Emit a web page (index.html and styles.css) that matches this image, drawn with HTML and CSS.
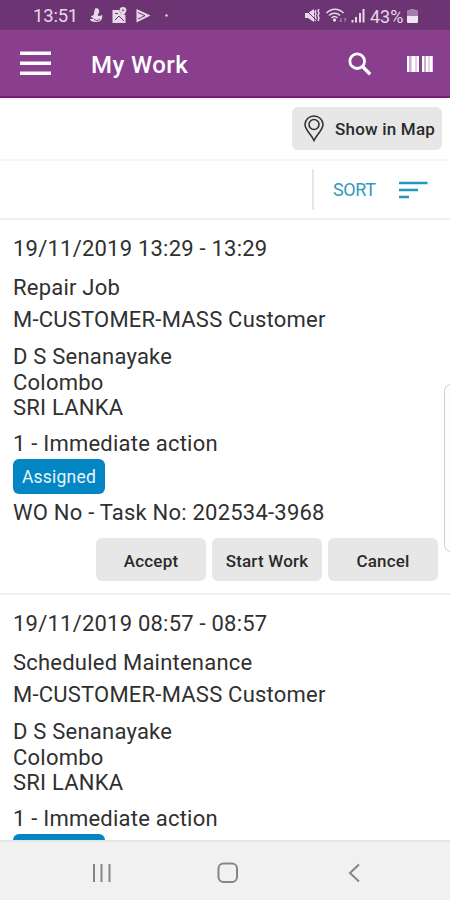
FILE: index.html
```
<!DOCTYPE html>
<html lang="en">
<head>
<meta charset="utf-8">
<title>My Work</title>
<link rel="stylesheet" href="styles.css">
</head>
<body>
<div class="screen">
  <div class="status">
    <span class="time">13:51</span>
    <svg class="notes" width="84" height="20" viewBox="0 0 84 20">
      <g fill="#e6d8e8">
        <path d="M6 2.500c3-1 5 1 4 4-1 2-2 2.500 0 3.500 2 0 3-1 3-2 1 5-1 8-6 8-4 0-6-1-6-3 1 0 3 0 4-1-2 0-3-1-3-2 2 0 3-1 3-3z"/>
        <path d="M23.500 4h7a5 5 0 0 0 6 5v8h-13z"/>
        <path d="M34 1a3.300 3.300 0 0 1 3.300 3.300C37.300 6.500 34 10 34 10s-3.300-3.500-3.300-5.700A3.300 3.300 0 0 1 34 1z"/>
        <path d="M47.500 3l14 6.500-14 7z"/>
        <circle cx="77.500" cy="9.500" r="1.200"/>
      </g>
      <g fill="none" stroke="#6c3472" stroke-width="1">
        <path d="M26 14l4-4 5 5M26 7.500h3M49 6.500l7 3.200-7 3.300M5 13c2 2 4 2 6 0"/>
        <circle cx="34" cy="4.300" r=".6"/>
      </g>
    </svg>
    <svg class="signals" width="62" height="20" viewBox="0 0 62 20">
      <g fill="#e6d8e8">
        <path d="M1 7h3l6-4v13l-6-4H1z"/>
        <path d="M47.500 14h2v2.500h-2zM51 11h2v5.500h-2zM55 7h2v9.500h-2zM58.500 3h2v13.500h-2z"/>
        <circle cx="30.500" cy="14" r="1.700"/>
      </g>
      <g fill="none" stroke="#e6d8e8" stroke-width="1.500">
        <path d="M12 4l-1 2 1 2-1 2 1 2-1 3M15 3l-1 2 1 2-1 3 1 2-1 3"/>
        <path d="M22.500 7c5-5 12-5 17 0M25 9.500c3-3 8-3 11 0M27.500 12c2-2 4-2 6 0"/>
      </g>
      <path d="M1 3l13 13" stroke="#6c3472" stroke-width="1"/>
      <path d="M37 12v4M35.500 14.500l1.500 1.500M41 16v-4M42.500 13.500L41 12" stroke="#ad8bb2" fill="none"/>
    </svg>
    <span class="percent">43%</span>
    <svg class="battery" width="11" height="17" viewBox="0 0 11 17">
      <path d="M3 1h5v1h2q1 0 1 1v5H0V3q0-1 1-1h2z" fill="#a57fab"/>
      <path d="M0 8h11v6q0 1-1 1H1q-1 0-1-1z" fill="#f0e6f1"/>
    </svg>
  </div>

  <header class="appbar">
    <svg class="menu" width="32" height="26" viewBox="0 0 32 26"><path d="M0 2.200h31M0 12.200h31M0 22.200h31" stroke="#fff" stroke-width="3.600"/></svg>
    <h1>My Work</h1>
    <svg class="search" width="24" height="24" viewBox="0 0 24 24" fill="none" stroke="#fff"><circle cx="9.200" cy="9.200" r="7.300" stroke-width="2.800"/><path d="M14.200 14.200l8 8" stroke-width="3.400"/></svg>
    <svg class="barcode" width="26" height="16" viewBox="0 0 26 16">
      <path d="M0 0h12v16H0zM15 0h11v16H15z" fill="#e3d2e5"/>
      <path d="M0 0h2v16H0zM5 0h3v16H5zM10 0h2v16h-2zM15 0h2v16h-2zM19 0h2v16h-2zM23 0h2v16h-2z" fill="#fff"/>
      <path d="M3 0v16M18 0v16" stroke="#b78dbb" stroke-width="1"/>
    </svg>
  </header>

  <div class="maprow">
    <button class="mapbtn">
      <svg width="20" height="27" viewBox="0 0 20 27" fill="none" stroke="#333" stroke-width="1.600"><path d="M10 25.500C8 20.500 1 15 1 9.500a9 8.500 0 0 1 18 0C19 15 12 20.500 10 25.500z"/><circle cx="10" cy="9.500" r="5"/></svg>
      <span>Show in Map</span>
    </button>
  </div>

  <div class="sortrow">
    <div class="sort">
      <span>SORT</span>
      <svg width="29" height="18" viewBox="0 0 29 18"><path d="M0 2h28.500M0 9h19M0 16h10" stroke="#2496bf" stroke-width="2.400"/></svg>
    </div>
  </div>

  <main class="list">
    <article class="card">
      <p class="date">19/11/2019 13:29 - 13:29</p>
      <p class="job">Repair Job</p>
      <p class="customer">M-CUSTOMER-MASS Customer</p>
      <address><span class="street">D S Senanayake</span><span class="city">Colombo</span><span class="country">SRI LANKA</span></address>
      <p class="priority">1 - Immediate action</p>
      <span class="badge">Assigned</span>
      <p class="order">WO No - Task No: 202534-3968</p>
      <div class="actions"><button>Accept</button><button>Start Work</button><button>Cancel</button></div>
    </article>
    <article class="card">
      <p class="date">19/11/2019 08:57 - 08:57</p>
      <p class="job">Scheduled Maintenance</p>
      <p class="customer">M-CUSTOMER-MASS Customer</p>
      <address><span class="street">D S Senanayake</span><span class="city">Colombo</span><span class="country">SRI LANKA</span></address>
      <p class="priority">1 - Immediate action</p>
      <span class="badge"></span>
    </article>
  </main>

  <nav class="navbar">
    <svg width="20" height="20" viewBox="0 0 20 20"><path d="M2 1v18M9.500 1v18M17.500 1v18" stroke="#858585" stroke-width="2"/></svg>
    <svg class="home" width="22" height="22" viewBox="0 0 22 22"><rect x="1.500" y="1.500" width="18.500" height="18.500" rx="5" fill="none" stroke="#858585" stroke-width="2"/></svg>
    <svg width="12" height="20" viewBox="0 0 12 20"><path d="M11 1.500L2 10l9 8.500" fill="none" stroke="#858585" stroke-width="2"/></svg>
  </nav>
  <div class="edge"></div>
</div>
</body>
</html>
```
FILE: styles.css
```
* { box-sizing: border-box; }
body { margin: 0; font-family: Roboto, "Liberation Sans", sans-serif; color: #303030; }
p, h1 { margin: 0; font-weight: 400; }
button { border: 0; padding: 2px 0 0; border-radius: 6px; background: #e7e7e7; font: 500 17px Roboto, sans-serif; letter-spacing: 0.2px; color: #2a2a2a; }
svg { display: block; flex: none; }

.screen { position: relative; width: 450px; height: 900px; overflow: hidden; display: flex; flex-direction: column; background: #fff; }

.status { flex: none; height: 30px; display: flex; align-items: center; padding: 2px 32px 0 33px; background: #6c3472; color: #e6d8e8; font-size: 18.5px; }
.time { width: 46px; letter-spacing: -0.2px; }
.notes { margin-left: 10px; }
.signals { margin-left: auto; }
.percent { width: 35px; margin: 0 2px 0 4px; font-size: 18px; letter-spacing: 0; }

.appbar { flex: none; height: 68px; display: flex; align-items: center; padding: 2px 17px 0 20px; background: #893f8d; border-bottom: 2px solid #781b7b; }
.appbar h1 { margin: 2px 0 0 39px; color: #fff; font-size: 24px; font-weight: 500; letter-spacing: 0.45px; }
.search { margin-left: auto; margin-right: 35px; }

.maprow { flex: none; height: 63px; display: flex; justify-content: flex-end; padding: 9px 8px 0 0; border-bottom: 2px solid #f5f5f5; }
.mapbtn { width: 150px; height: 43px; display: flex; align-items: center; padding: 0 0 0 12px; gap: 11px; white-space: nowrap; }

.sortrow { flex: none; height: 59px; display: flex; justify-content: flex-end; align-items: center; border-bottom: 2px solid #f0f0f0; }
.sort { width: 138px; height: 41px; display: flex; align-items: center; padding-left: 19px; border-left: 2px solid #e6e6e6; color: #3399c0; font-size: 18px; letter-spacing: -0.4px; }
.sort span { width: 66px; }

.list { flex: 1; min-height: 0; overflow: hidden; }
.card { height: 375px; padding: 16px 12px 0 13px; border-bottom: 2px solid #f0f0f0; font-size: 22px; line-height: 26px; letter-spacing: 0.22px; white-space: nowrap; }
.job { margin-top: 13px; }
.customer { margin-top: 6px; }
address { display: flex; flex-direction: column; margin: 11px 0 10px; font-style: normal; line-height: 25.6px; }
.badge { display: block; width: 92px; height: 35px; margin: 2.5px 0 6px; border-radius: 6px; background: #0586c4; color: #e8f5fb; font-size: 17.5px; line-height: 37px; text-align: center; }
.actions { display: flex; justify-content: flex-end; gap: 6px; margin-top: 12px; }
.actions button { width: 110px; height: 43px; }

.navbar { flex: none; height: 60px; display: flex; align-items: center; padding: 4px 90px 0 92px; justify-content: space-between; background: #f1f1f1; border-top: 2px solid #e7e7e7; }
.home { margin-right: 4px; }
.edge { position: absolute; left: 444px; top: 384px; width: 14px; height: 168px; border: 1.500px solid #cfcfcf; border-radius: 8px; background: #fdfdfd; }
```
